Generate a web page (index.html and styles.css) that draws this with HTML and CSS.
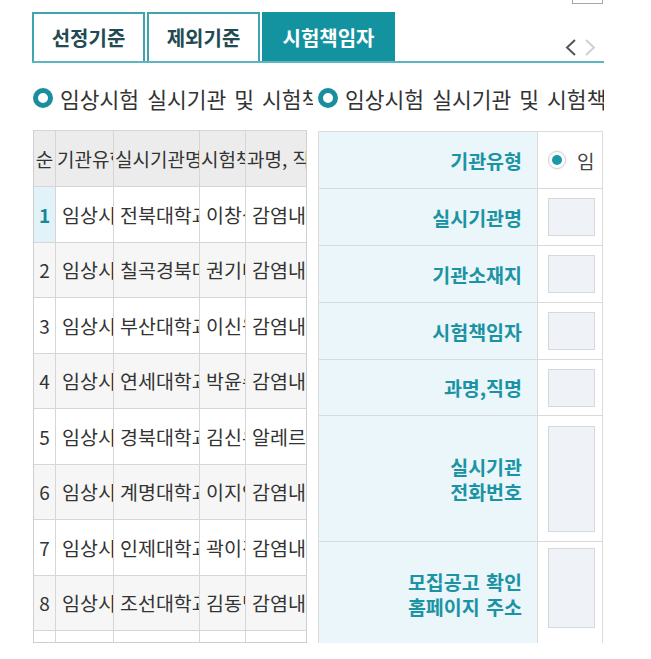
FILE: index.html
```html
<!DOCTYPE html>
<html lang="ko">
<head>
<meta charset="utf-8">
<title>시험책임자</title>
<link rel="stylesheet" href="styles.css">
</head>
<body>
<div class="page">
  <div class="topbar"><span class="topbox"></span></div>
  <div class="tabs">
    <div class="tab">선정기준</div>
    <div class="tab">제외기준</div>
    <div class="tab active">시험책임자</div>
    <div class="arrows">
      <svg width="32" height="17" viewBox="0 0 32 17">
        <polyline points="10,1 2,8.5 10,16" fill="none" stroke="#555" stroke-width="2"/>
        <polyline points="21,1 29,8.5 21,16" fill="none" stroke="#c9d2da" stroke-width="2"/>
      </svg>
    </div>
  </div>
  <div class="panels">
    <section class="panel left">
      <h2 class="title"><span class="ring"></span>임상시험 실시기관 및 시험책임자</h2>
      <div class="listwrap">
        <table class="list">
          <colgroup><col class="c1"><col class="c2"><col class="c3"><col class="c4"><col class="c5"></colgroup>
          <thead>
            <tr class="head"><th><div class="hc">순</div></th><th><div class="hc">기관유형</div></th><th><div class="hc">실시기관명</div></th><th><div class="hc">시험책임자</div></th><th><div class="hc">과명, 직위</div></th></tr>
          </thead>
          <tbody>
            <tr class="row"><td class="sel"><div class="nc">1</div></td><td><div class="dc">임상시험실시기관</div></td><td><div class="dc">전북대학교병원</div></td><td><div class="dc">이창섭</div></td><td><div class="dc">감염내과</div></td></tr>
            <tr class="row alt"><td><div class="nc">2</div></td><td><div class="dc">임상시험실시기관</div></td><td><div class="dc">칠곡경북대학교병원</div></td><td><div class="dc">권기태</div></td><td><div class="dc">감염내과</div></td></tr>
            <tr class="row"><td><div class="nc">3</div></td><td><div class="dc">임상시험실시기관</div></td><td><div class="dc">부산대학교병원</div></td><td><div class="dc">이신원</div></td><td><div class="dc">감염내과</div></td></tr>
            <tr class="row alt"><td><div class="nc">4</div></td><td><div class="dc">임상시험실시기관</div></td><td><div class="dc">연세대학교 세브란스병원</div></td><td><div class="dc">박윤수</div></td><td><div class="dc">감염내과</div></td></tr>
            <tr class="row"><td><div class="nc">5</div></td><td><div class="dc">임상시험실시기관</div></td><td><div class="dc">경북대학교병원</div></td><td><div class="dc">김신우</div></td><td><div class="dc">알레르기내과</div></td></tr>
            <tr class="row alt"><td><div class="nc">6</div></td><td><div class="dc">임상시험실시기관</div></td><td><div class="dc">계명대학교 동산병원</div></td><td><div class="dc">이지영</div></td><td><div class="dc">감염내과</div></td></tr>
            <tr class="row"><td><div class="nc">7</div></td><td><div class="dc">임상시험실시기관</div></td><td><div class="dc">인제대학교 부산백병원</div></td><td><div class="dc">곽이경</div></td><td><div class="dc">감염내과</div></td></tr>
            <tr class="row alt"><td><div class="nc">8</div></td><td><div class="dc">임상시험실시기관</div></td><td><div class="dc">조선대학교병원</div></td><td><div class="dc">김동민</div></td><td><div class="dc">감염내과</div></td></tr>
            <tr class="row"><td><div class="nc"></div></td><td><div class="dc"></div></td><td><div class="dc"></div></td><td><div class="dc"></div></td><td><div class="dc"></div></td></tr>
          </tbody>
        </table>
      </div>
    </section>
    <section class="panel right">
      <h2 class="title"><span class="ring"></span>임상시험 실시기관 및 시험책임자</h2>
      <div class="formwrap">
        <table class="form">
          <colgroup><col class="fth"><col class="ftd"></colgroup>
          <tr class="r1"><th>기관유형</th><td><div class="fc"><span class="radio"><span class="dot"></span></span><span class="rlabel">임상시험실시기관</span></div></td></tr>
          <tr class="r2"><th>실시기관명</th><td><div class="field"></div></td></tr>
          <tr class="r3"><th>기관소재지</th><td><div class="field"></div></td></tr>
          <tr class="r4"><th>시험책임자</th><td><div class="field"></div></td></tr>
          <tr class="r5"><th>과명,직명</th><td><div class="field"></div></td></tr>
          <tr class="r6"><th>실시기관<br>전화번호</th><td><div class="field tall"></div></td></tr>
          <tr class="r7"><th>모집공고 확인<br>홈페이지 주소</th><td><div class="field mid"></div></td></tr>
        </table>
      </div>
    </section>
  </div>
</div>
</body>
</html>
```

FILE: styles.css
```css
html, body {
  margin: 0;
  padding: 0;
  background: #fff;
}
body {
  font-family: "Noto Sans CJK KR", "Noto Sans", sans-serif;
  color: #333;
  overflow: hidden;
}
.page {
  padding-left: 32px;
  width: 572px;
}
.topbar {
  height: 12px;
  display: flex;
  justify-content: flex-end;
}
.topbox {
  display: block;
  width: 29px;
  height: 3px;
  border: 1px solid #a8a8a8;
  border-top: 0;
  margin-right: 1px;
}
.tabs {
  display: flex;
  height: 49px;
  border-bottom: 2px solid #5fb5bf;
}
.tab {
  box-sizing: border-box;
  width: 113px;
  height: 49px;
  margin-right: 2px;
  border: 2px solid #3ea4b0;
  border-bottom: 0;
  display: flex;
  align-items: center;
  justify-content: center;
  font-size: 20px;
  font-weight: 700;
  color: #214a52;
  background: #fff;
}
.tab.active {
  width: 133px;
  background: #13929f;
  border-color: #13929f;
  color: #fff;
}
.arrows {
  margin-left: auto;
  margin-right: 7px;
  align-self: flex-end;
  margin-bottom: 5px;
  height: 17px;
}
.arrows svg { display: block; }
.panels {
  display: flex;
  gap: 5px;
}
.panel {
  overflow: hidden;
}
.panel.left {
  width: 280px;
  margin-left: 1px;
}
.panel.right {
  width: 286px;
}
.title {
  margin: 0;
  height: 67px;
  padding-top: 3px;
  box-sizing: border-box;
  display: flex;
  align-items: center;
  white-space: nowrap;
  font-size: 21.5px;
  font-weight: 400;
  word-spacing: 2px;
  color: #333;
}
.ring {
  flex: none;
  box-sizing: border-box;
  width: 20px;
  height: 20px;
  border-radius: 50%;
  border: 5px solid #1a8e9e;
  margin-right: 7px;
}
.listwrap {
  box-sizing: border-box;
  width: 274px;
  height: 513px;
  border: 1px solid #cfcfcf;
  border-top: 0;
  overflow: hidden;
}
.list {
  border-collapse: collapse;
  table-layout: fixed;
  width: 273px;
  margin-left: -1px;
}
.list col.c1 { width: 22px; }
.list col.c2 { width: 58px; }
.list col.c3 { width: 86px; }
.list col.c4 { width: 46px; }
.list col.c5 { width: 61px; }
.list th, .list td {
  border: 1px solid #d6d6d6;
  padding: 0;
  color: #333;
}
.list th {
  height: 55px;
  background: #ececec;
  font-size: 19px;
  font-weight: 400;
}
.hc, .dc, .nc {
  overflow: hidden;
  white-space: nowrap;
}
.hc {
  text-align: center;
  padding: 0 1px;
}
.dc {
  font-size: 19.5px;
  padding-left: 6px;
}
.nc {
  font-size: 19px;
  text-align: center;
}
.list tr.row { height: 55.5px; }
.list tr.alt td { background: #f6f6f6; }
.list td.sel {
  background: #e1f3f8;
  color: #1a8898;
  font-weight: 700;
}
.formwrap {
  box-sizing: border-box;
  width: 285px;
  height: 512px;
  margin-top: 1px;
  border: 1px solid #dcdcdc;
  border-bottom: 0;
  overflow: hidden;
}
.form {
  border-collapse: collapse;
  table-layout: fixed;
  width: 285px;
  margin: -1px 0 0 -1px;
}
.form col.fth { width: 219px; }
.form col.ftd { width: 66px; }
.form th, .form td {
  border: 1px solid #d9d9d9;
}
.form th {
  background: #eaf6f9;
  color: #1b93a4;
  font-size: 19.5px;
  font-weight: 700;
  text-align: right;
  padding: 0 15px 0 0;
  line-height: 25px;
  word-spacing: 1px;
}
.form td {
  background: #fff;
  padding: 0 0 0 10px;
}
.form tr.r1 { height: 57px; }
.form tr.r2 { height: 57px; }
.form tr.r3 { height: 57px; }
.form tr.r4 { height: 57px; }
.form tr.r5 { height: 56px; }
.form tr.r6 { height: 126px; }
.form tr.r7 { height: 104px; }
.fc {
  width: 47px;
  overflow: hidden;
  white-space: nowrap;
  display: flex;
  align-items: center;
}
.radio {
  flex: none;
  display: flex;
  align-items: center;
  justify-content: center;
  box-sizing: border-box;
  width: 18px;
  height: 18px;
  border-radius: 50%;
  border: 1px solid #d4d4d4;
  background: #fff;
  box-shadow: 0 0 2px rgba(0,0,0,0.12);
}
.dot {
  width: 10px;
  height: 10px;
  border-radius: 50%;
  background: #1a9aa8;
}
.rlabel {
  flex: none;
  margin-left: 11px;
  font-size: 19px;
  color: #444;
}
.field {
  box-sizing: border-box;
  width: 47px;
  height: 38px;
  background: #eff3f8;
  border: 1px solid #d4d9df;
}
.field.tall { height: 106px; }
.field.mid { height: 80px; margin-top: -12px; }
```
